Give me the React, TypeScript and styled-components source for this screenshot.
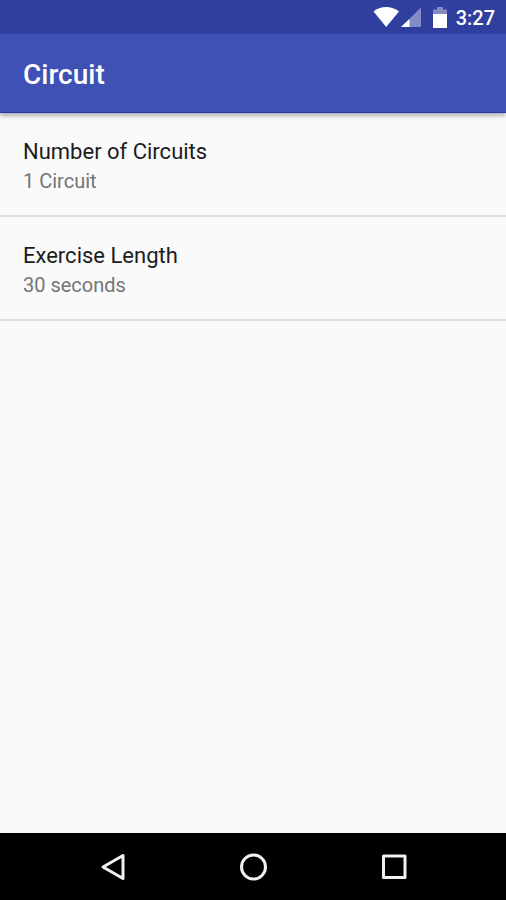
import React from "react";
import styled, { createGlobalStyle } from "styled-components";

const GlobalStyle = createGlobalStyle`
  * { box-sizing: border-box; }
  body {
    margin: 0;
    background: #fafafa;
    font-family: Roboto, "Noto Sans", sans-serif;
  }
`;

const Screen = styled.div`
  display: flex;
  flex-direction: column;
  min-height: 100vh;
  background: #fafafa;
`;

const StatusBar = styled.div`
  display: flex;
  align-items: center;
  justify-content: flex-end;
  height: 34px;
  padding: 2px 11px 0 0;
  background: #303f9f;
  color: #fff;
`;

const StatusIcons = styled.svg`
  display: block;
  margin-right: 8px;
`;

const Clock = styled.time`
  font-size: 20px;
  line-height: 24px;
  font-weight: 500;
`;

const AppBar = styled.header`
  display: flex;
  align-items: center;
  height: 79px;
  padding: 4px 23px 0;
  background: #3f51b5;
  border-bottom: 1px solid #2339a0;
  box-shadow: 0 3px 4px rgba(0, 0, 0, 0.28);
`;

const Title = styled.h1`
  margin: 0;
  color: #fff;
  font-size: 28px;
  line-height: 32px;
  font-weight: 500;
`;

const Preferences = styled.main`
  display: flex;
  flex-direction: column;
  flex: 1;
`;

const Preference = styled.button`
  display: flex;
  flex-direction: column;
  justify-content: center;
  height: 104px;
  padding: 4px 23px 0;
  border: 0;
  border-bottom: 2px solid #dedede;
  background: transparent;
  font-family: inherit;
  text-align: left;
  cursor: pointer;
`;

const PreferenceTitle = styled.span`
  color: #1c1c1c;
  font-size: 22px;
  line-height: 30px;
`;

const PreferenceSummary = styled.span`
  color: #757575;
  font-size: 20px;
  line-height: 28px;
`;

const NavigationBar = styled.nav`
  display: flex;
  justify-content: center;
  height: 67px;
  background: #000;
`;

const NavigationButton = styled.button`
  display: flex;
  align-items: center;
  justify-content: center;
  width: 28%;
  padding: 0;
  border: 0;
  background: transparent;
  cursor: pointer;
`;

const NavigationIcon = styled.svg`
  display: block;
  fill: none;
  stroke: #f1f1f1;
  stroke-width: 3;
  stroke-linejoin: round;
`;

const preferences = [
  { title: "Number of Circuits", summary: "1 Circuit" },
  { title: "Exercise Length", summary: "30 seconds" },
];

const navigation = [
  { label: "Back", shape: <path d="M8 16 28 4.500v23Z" /> },
  { label: "Home", shape: <circle cx="16.5" cy="16" r="12" /> },
  { label: "Overview", shape: <rect x="4.5" y="5" width="21.5" height="21.5" /> },
];

export default function App() {
  return (
    <>
      <GlobalStyle />
      <Screen>
        <StatusBar>
          <StatusIcons width="76" height="24" viewBox="0 0 76 24" fill="#fff" aria-hidden="true">
            <path d="M1.500 5.500C8-.5 20-.5 27 5.500L14.200 21Z" />
            <path d="M49 1.500V21H29Z" opacity=".4" />
            <path d="M37.500 13V21H29Z" />
            <path d="M61 8V3.500h4V1h6v2.500h4V8Z" opacity=".4" />
            <path d="M61 8h14v14H61Z" />
          </StatusIcons>
          <Clock>3:27</Clock>
        </StatusBar>
        <AppBar>
          <Title>Circuit</Title>
        </AppBar>
        <Preferences>
          {preferences.map(({ title, summary }) => (
            <Preference key={title} type="button">
              <PreferenceTitle>{title}</PreferenceTitle>
              <PreferenceSummary>{summary}</PreferenceSummary>
            </Preference>
          ))}
        </Preferences>
        <NavigationBar>
          {navigation.map(({ label, shape }) => (
            <NavigationButton key={label} type="button" aria-label={label}>
              <NavigationIcon width="32" height="32" viewBox="0 0 32 32" aria-hidden="true">
                {shape}
              </NavigationIcon>
            </NavigationButton>
          ))}
        </NavigationBar>
      </Screen>
    </>
  );
}
